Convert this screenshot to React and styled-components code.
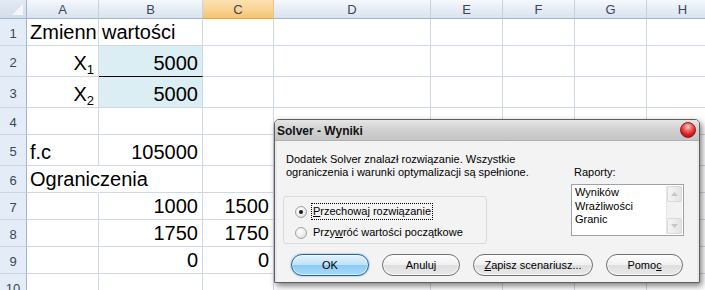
import React from 'react'
import styled, { createGlobalStyle, css } from 'styled-components'

const GlobalStyle = createGlobalStyle`
  html, body {
    margin: 0;
    padding: 0;
    background: #ffffff;
    overflow: hidden;
  }
  body {
    font-family: "Liberation Sans", Arial, sans-serif;
  }
`

const columns = [
  { key: 'A', w: 72 },
  { key: 'B', w: 104 },
  { key: 'C', w: 71, active: true },
  { key: 'D', w: 157 },
  { key: 'E', w: 72 },
  { key: 'F', w: 72 },
  { key: 'G', w: 72 },
  { key: 'H', w: 72 },
]

const rowHeights = [27, 31, 31, 27, 31, 27, 27, 27, 27, 27]

const cells = {
  A1: { v: 'Zmienn' },
  B1: { v: 'wartości' },
  A2: { v: 'X', sub: '1', right: true },
  B2: { v: '5000', right: true, fill: true, line: true },
  A3: { v: 'X', sub: '2', right: true },
  B3: { v: '5000', right: true, fill: true },
  A5: { v: 'f.c' },
  B5: { v: '105000', right: true },
  A6: { v: 'Ograniczenia', spill: true },
  B7: { v: '1000', right: true },
  C7: { v: '1500', right: true },
  B8: { v: '1750', right: true },
  C8: { v: '1750', right: true },
  B9: { v: '0', right: true },
  C9: { v: '0', right: true },
}

export default function App() {
  return (
    <Screen>
      <GlobalStyle />
      <Sheet
        $cols={columns.map((c) => c.w + 'px').join(' ')}
        $rows={rowHeights.map((h) => h + 'px').join(' ')}
      >
        <Corner />
        {columns.map((c) => (
          <ColHead key={c.key} $active={c.active}>{c.key}</ColHead>
        ))}
        {rowHeights.map((h, r) => (
          <React.Fragment key={r}>
            <RowHead>{r + 1}</RowHead>
            {columns.map((c) => {
              const cell = cells[c.key + (r + 1)]
              return (
                <Cell
                  key={c.key}
                  $right={cell?.right}
                  $fill={cell?.fill}
                  $line={cell?.line}
                  $spill={cell?.spill}
                >
                  {cell && (
                    <span>
                      {cell.v}
                      {cell.sub && <Sub>{cell.sub}</Sub>}
                    </span>
                  )}
                </Cell>
              )
            })}
          </React.Fragment>
        ))}
      </Sheet>

      <Dialog>
        <TitleBar>
          <Title>Solver - Wyniki</Title>
          <CloseButton />
        </TitleBar>
        <Body>
          <Content>
            <LeftPane>
              <Message>
                Dodatek Solver znalazł rozwiązanie. Wszystkie
                <br />
                ograniczenia i warunki optymalizacji są spełnione.
              </Message>
              <GroupBox>
                <RadioRow>
                  <Radio $checked />
                  <RadioLabel $focused>
                    <u>P</u>rzechowaj rozwiązanie
                  </RadioLabel>
                </RadioRow>
                <RadioRow>
                  <Radio />
                  <RadioLabel>
                    Przy<u>w</u>róć wartości początkowe
                  </RadioLabel>
                </RadioRow>
              </GroupBox>
            </LeftPane>
            <RightPane>
              <FieldLabel>Raporty:</FieldLabel>
              <ListBox>
                <ListItems>
                  <div>Wyników</div>
                  <div>Wrażliwości</div>
                  <div>Granic</div>
                </ListItems>
                <ScrollBar>
                  <ScrollArrow>
                    <svg width="7" height="4" viewBox="0 0 7 4">
                      <path d="M0 4 L3.5 0 L7 4 Z" fill="#c4c8cc" />
                    </svg>
                  </ScrollArrow>
                  <ScrollArrow>
                    <svg width="7" height="4" viewBox="0 0 7 4">
                      <path d="M0 0 L3.5 4 L7 0 Z" fill="#c4c8cc" />
                    </svg>
                  </ScrollArrow>
                </ScrollBar>
              </ListBox>
            </RightPane>
          </Content>
          <ButtonRow>
            <Button $primary $w={78}>OK</Button>
            <Button $w={78}>Anuluj</Button>
            <Button $w={120}><u>Z</u>apisz scenariusz...</Button>
            <Button $w={77}>Pomo<u>c</u></Button>
          </ButtonRow>
        </Body>
      </Dialog>
    </Screen>
  )
}

const Screen = styled.div`
  position: relative;
  width: 705px;
  height: 290px;
  overflow: hidden;
  background: #ffffff;
`

const Sheet = styled.div`
  display: grid;
  grid-template-columns: 27px ${(p) => p.$cols};
  grid-template-rows: 19px ${(p) => p.$rows};
`

const Corner = styled.div`
  position: relative;
  box-sizing: border-box;
  background: linear-gradient(#e3eaf3, #d3dde9);
  border-right: 1px solid #9eb6ce;
  border-bottom: 1px solid #9eb6ce;
  &::after {
    content: '';
    position: absolute;
    right: 3px;
    bottom: 3px;
    border-left: 11px solid transparent;
    border-bottom: 11px solid #f3f6fa;
  }
`

const ColHead = styled.div`
  box-sizing: border-box;
  display: flex;
  align-items: center;
  justify-content: center;
  font-size: 13px;
  color: #3a4657;
  border-right: 1px solid #c5d2e0;
  border-bottom: 1px solid #9eb6ce;
  background: linear-gradient(#f6f8fc, #e6edf6 50%, #dae3ee);
  ${(p) =>
    p.$active &&
    css`
      background: linear-gradient(#fbe1b0, #f9d597 50%, #f3c370);
      border-bottom-color: #f2a14a;
      border-right-color: #e8c289;
    `}
`

const RowHead = styled.div`
  box-sizing: border-box;
  display: flex;
  align-items: center;
  justify-content: center;
  padding-top: 2px;
  font-size: 13px;
  color: #3a4657;
  background: #e4ecf7;
  border-right: 1px solid #9eb6ce;
  border-bottom: 1px solid #c9d6e6;
`

const Cell = styled.div`
  box-sizing: border-box;
  display: flex;
  align-items: flex-end;
  justify-content: ${(p) => (p.$right ? 'flex-end' : 'flex-start')};
  padding: 0 4px 1px 3px;
  font-size: 20px;
  line-height: 23px;
  color: #000000;
  white-space: nowrap;
  overflow: hidden;
  border-right: 1px solid #d0d7e5;
  border-bottom: 1px solid #d0d7e5;
  background: ${(p) => (p.$fill ? '#dbeef3' : 'transparent')};
  ${(p) =>
    p.$line &&
    css`
      border-bottom: 1px solid #000000;
    `}
  ${(p) =>
    p.$spill &&
    css`
      overflow: visible;
      border-right-color: transparent;
      position: relative;
      z-index: 1;
    `}
`

const Sub = styled.sub`
  font-size: 13px;
  line-height: 0;
  vertical-align: -4px;
`

const Dialog = styled.div`
  position: absolute;
  left: 274px;
  top: 119px;
  width: 426px;
  height: 164px;
  box-sizing: border-box;
  border: 1px solid #5e5e5e;
  border-radius: 5px 5px 1px 1px;
  background: #f3f3f3;
  box-shadow: 2px 3px 6px rgba(0, 0, 0, 0.5);
  font-family: "Liberation Sans", Arial, sans-serif;
  font-size: 11px;
  color: #000000;
  display: flex;
  flex-direction: column;
`

const TitleBar = styled.div`
  height: 21px;
  display: flex;
  align-items: center;
  justify-content: space-between;
  padding: 2px 3px 0 2px;
  box-sizing: border-box;
  border-radius: 4px 4px 0 0;
  background: linear-gradient(#e6e6e6, #d2d2d2 45%, #c4c4c4);
  border-bottom: 1px solid #b0b0b0;
`

const Title = styled.span`
  font-size: 12px;
  font-weight: bold;
  color: #111111;
`

const CloseButton = styled.span`
  width: 14px;
  height: 14px;
  margin-top: -2px;
  border-radius: 50%;
  border: 1px solid #8f1c1c;
  background: radial-gradient(circle at 50% 28%, #ffd0d0 0, #f46a6a 30%, #d61b1b 65%, #9b0c0c 100%);
`

const Body = styled.div`
  flex: 1;
  display: flex;
  flex-direction: column;
  padding-top: 12px;
  border-left: 2px solid #e9e9e9;
  border-right: 2px solid #e9e9e9;
`

const Content = styled.div`
  display: flex;
`

const LeftPane = styled.div`
  width: 204px;
  margin-left: 6px;
`

const Message = styled.div`
  padding-left: 3px;
  line-height: 13px;
  white-space: nowrap;
`

const GroupBox = styled.div`
  margin-top: 17px;
  height: 48px;
  box-sizing: border-box;
  border: 1px solid #d5dbe0;
  border-radius: 3px;
  padding: 4px 0 0 11px;
  display: flex;
  flex-direction: column;
`

const RadioRow = styled.div`
  height: 21px;
  display: flex;
  align-items: center;
  gap: 4px;
`

const Radio = styled.span`
  width: 12px;
  height: 12px;
  box-sizing: border-box;
  border-radius: 50%;
  border: 1px solid #a3a3a3;
  background: radial-gradient(circle at 40% 35%, #ffffff 0, #ececec 55%, #d5d5d5 100%);
  display: flex;
  align-items: center;
  justify-content: center;
  &::after {
    content: '';
    width: 4px;
    height: 4px;
    border-radius: 50%;
    background: ${(p) => (p.$checked ? '#1a1a1a' : 'transparent')};
  }
`

const RadioLabel = styled.span`
  padding: 1px 1px 2px;
  border: 1px dotted ${(p) => (p.$focused ? '#000000' : 'transparent')};
  white-space: nowrap;
`

const RightPane = styled.div`
  margin-left: 84px;
  width: 113px;
  padding-top: 13px;
`

const FieldLabel = styled.div`
  padding-left: 3px;
  line-height: 13px;
`

const ListBox = styled.div`
  margin-top: 5px;
  height: 52px;
  box-sizing: border-box;
  border: 1px solid #9ea3a8;
  background: #ffffff;
  display: flex;
`

const ListItems = styled.div`
  flex: 1;
  padding: 1px 0 0 3px;
  line-height: 13.5px;
`

const ScrollBar = styled.div`
  width: 15px;
  margin: 1px 1px 1px 0;
  background: #f2f2f2;
  border-left: 1px solid #e6e6e6;
  display: flex;
  flex-direction: column;
  justify-content: space-between;
`

const ScrollArrow = styled.div`
  height: 14px;
  display: flex;
  align-items: center;
  justify-content: center;
  background: linear-gradient(90deg, #f4f4f4, #e4e4e4);
  border: 1px solid #dadada;
  border-radius: 2px;
`

const ButtonRow = styled.div`
  margin-top: 10px;
  padding-left: 14px;
  display: flex;
  gap: 13px;
`

const Button = styled.div`
  width: ${(p) => p.$w}px;
  height: 22px;
  box-sizing: border-box;
  border-radius: 11px;
  border: 1px solid #707070;
  display: flex;
  align-items: center;
  justify-content: center;
  background: linear-gradient(#fdfdfd, #f1f1f1 48%, #dedede 52%, #e9e9e9);
  box-shadow: inset 0 0 0 1px rgba(255, 255, 255, 0.7);
  ${(p) =>
    p.$primary &&
    css`
      border-color: #2c628b;
      background: linear-gradient(#e3f3fd, #bde2fa 48%, #8ccaf4 52%, #a9d8f8);
      box-shadow: inset 0 0 0 1px rgba(255, 255, 255, 0.5), 0 0 2px #4a9ee8;
    `}
`
